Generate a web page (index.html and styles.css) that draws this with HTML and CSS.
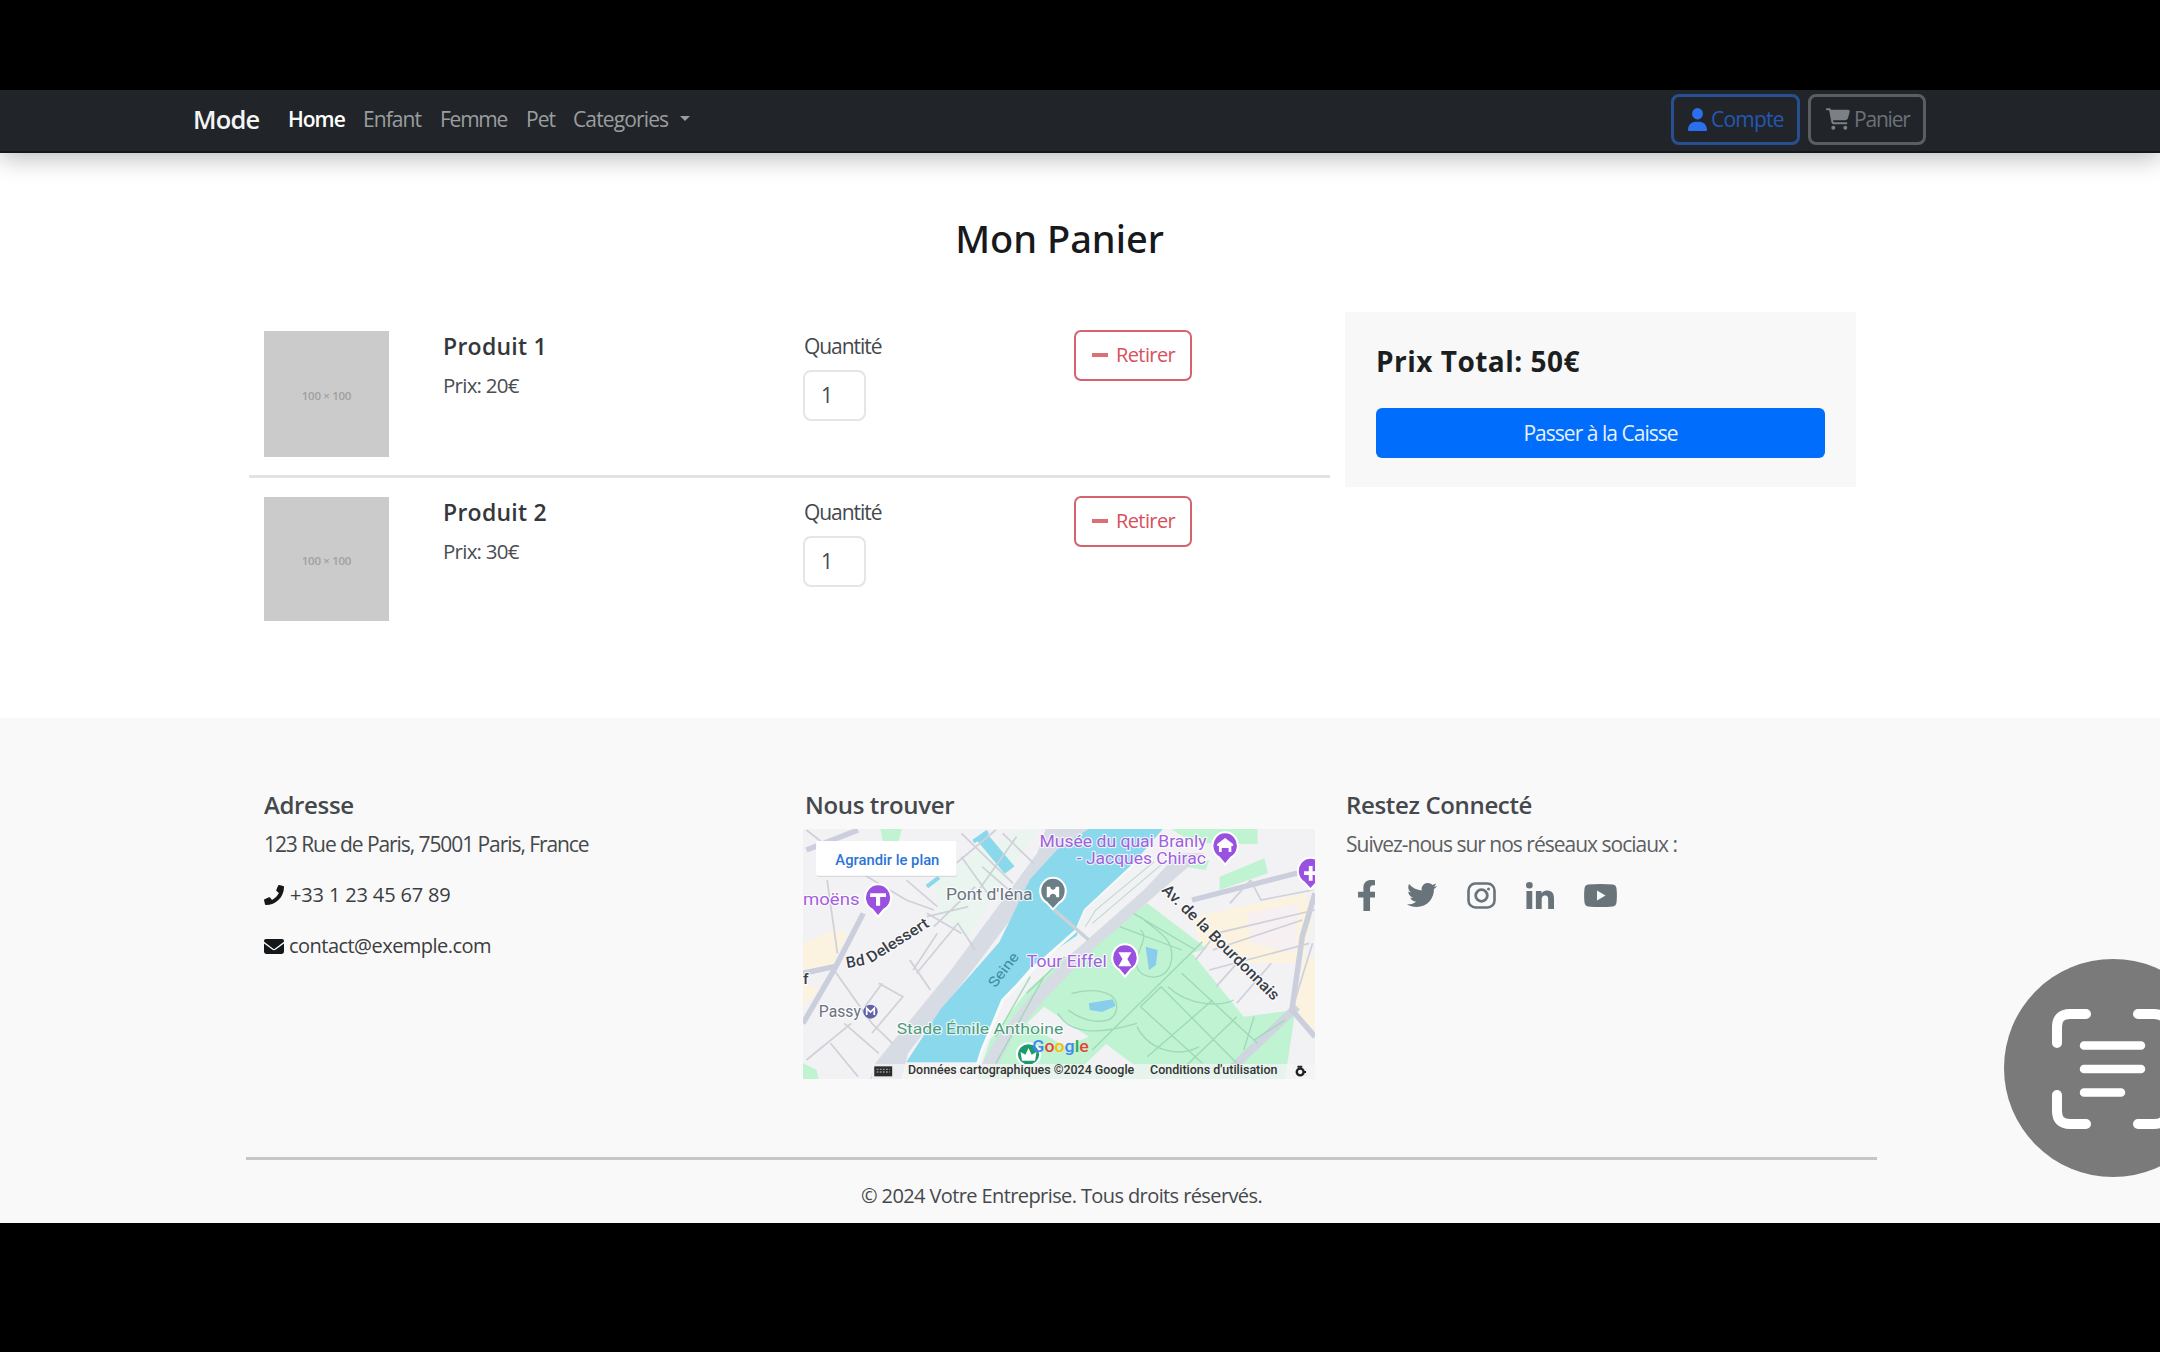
FILE: index.html
```
<!DOCTYPE html>
<html lang="fr">
<head>
<meta charset="utf-8">
<title>Mon Panier</title>
<link rel="stylesheet" href="styles.css">
</head>
<body>
<div class="page">
  <nav class="navbar">
    <a class="brand">Mode</a>
    <ul class="nav-links">
      <li class="active l-home">Home</li>
      <li class="l-enfant">Enfant</li>
      <li class="l-femme">Femme</li>
      <li class="l-pet">Pet</li>
      <li class="l-cat">Categories</li>
    </ul>
    <span class="caret"></span>
    <div class="nav-actions">
      <a class="btn btn-account">
        <svg width="19" height="23" viewBox="0 0 448 512" preserveAspectRatio="none"><path fill="currentColor" d="M224 256A128 128 0 1 0 224 0a128 128 0 1 0 0 256zm-46 48C80 304 0 384 0 482c0 17 13 30 30 30h388c17 0 30-13 30-30 0-98-80-178-178-178z"/></svg>
        <span>Compte</span>
      </a>
      <a class="btn btn-cart">
        <svg width="24" height="22" viewBox="0 0 576 512"><path fill="currentColor" d="M0 24C0 11 11 0 24 0h46c22 0 41 13 50 32h411c26 0 45 25 38 50l-41 152c-9 31-37 54-70 54H171l5 29c2 11 12 19 24 19h288c13 0 24 11 24 24s-11 24-24 24H200c-35 0-64-25-71-58L77 54c0-4-4-6-7-6H24C11 48 0 37 0 24zm128 440a48 48 0 1 1 96 0 48 48 0 1 1-96 0zm336-48a48 48 0 1 1 0 96 48 48 0 1 1 0-96z"/></svg>
        <span>Panier</span>
      </a>
    </div>
  </nav>

  <main class="cart">
    <h1 class="cart-title">Mon Panier</h1>
    <div class="cart-body">
      <div class="items">
        <div class="item">
          <div class="thumb">100 × 100</div>
          <div class="info"><h2>Produit 1</h2><p>Prix: 20€</p></div>
          <div class="qty"><label>Quantité</label><div class="qty-input">1</div></div>
          <a class="btn-remove"><i></i><span>Retirer</span></a>
        </div>
        <div class="item">
          <div class="thumb thumb-short">100 × 100</div>
          <div class="info"><h2>Produit 2</h2><p>Prix: 30€</p></div>
          <div class="qty"><label>Quantité</label><div class="qty-input">1</div></div>
          <a class="btn-remove"><i></i><span>Retirer</span></a>
        </div>
      </div>
      <aside class="summary">
        <h2>Prix Total: 50€</h2>
        <a class="checkout">Passer à la Caisse</a>
      </aside>
    </div>
  </main>

  <footer class="footer">
    <div class="footer-cols">
      <section>
        <h3>Adresse</h3>
        <p class="line tight">123 Rue de Paris, 75001 Paris, France</p>
        <p class="line contact phone">
          <svg width="20" height="20" viewBox="0 0 512 512"><path fill="currentColor" d="M493 25 389 1c-11-3-23 3-27 14l-48 112c-4 10-1 21 7 28l60 50c-36 76-98 139-176 176l-50-60c-7-8-18-11-28-7L15 362c-11 5-17 17-14 28l24 104c2 11 12 18 23 18 256 0 464-207 464-464 0-11-7-21-19-23z"/></svg>
          <span>+33 1 23 45 67 89</span>
        </p>
        <p class="line contact mail">
          <svg width="20" height="15" viewBox="0 0 512 384" preserveAspectRatio="none"><path fill="currentColor" d="M48 0h416c27 0 48 21 48 48 0 15-7 29-19 38L275 250c-11 9-27 9-38 0L19 86C7 77 0 63 0 48 0 21 21 0 48 0zM0 112l218 163c22 17 54 17 76 0l218-163v208c0 35-29 64-64 64H64c-35 0-64-29-64-64z"/></svg>
          <span>contact@exemple.com</span>
        </p>
      </section>
      <section>
        <h3 class="h-find">Nous trouver</h3>
        <svg class="map" viewBox="40 177 1487 750" preserveAspectRatio="none">
          <rect x="40" y="177" width="1487" height="750" fill="#f2f1f4"/>
          <!-- pale blocks -->
          <g fill="#fbf3df">
            <path d="M40 520l90-40 40 10-50 110-80 20zM1170 440l330-70 20 70-30 140-220 0-80-70zM1527 560v230l-60-70 30-160z"/>
            <path d="M40 640l50 20-50 50z"/>
          </g>
          <path fill="#f6f0f2" d="M1330 430l150-30-10 150-130-30z"/>
          <!-- parks -->
          <g fill="#bff3d2">
            <path d="M1040 400l420 330-50 197H545l40-120 110-150 90-80 120-90z"/>
            <path d="M1110 177h250v45h-110l-80-5zM1250 320l130-55 10 45-140 50zM1150 290l70-20-10 30z"/>
            <path d="M265 177h62l-10 38h-45zM40 880l40 20 5 27H40z"/>
          </g>
          <path fill="#e9f5ee" d="M420 330l240-150 60 0-200 320-80-60z"/>
          <g fill="#f2f1f4">
            <path d="M740 710l130 90-70 30-110-70zM920 822l90 70h-160zM1170 550l150 190 150-20-210-200z"/>
          </g>
          <path fill="#bff3d2" d="M1350 740l120-20-30 207h-140z"/>
          <!-- roads along the river -->
          <path fill="#d7dbe3" d="M250 880 470 600 720 250 745 177h125L700 370 540 590 345 850l-20 77h-90z"/>
          <path fill="#d7dbe3" d="M1130 250h75L880 540 740 690 650 800 600 900h-50l50-90 90-120 120-130 220-200z"/>
          <path fill="none" stroke="#cfd6df" stroke-width="24" d="M1475 710 1290 890"/>
          <!-- river -->
          <path fill="#89d8ec" d="M870 177h215l-100 120-130 130-20 70-130 90-90 110-70 180H340l100-160 170-200 90-190 80-90z"/>
          <path fill="none" stroke="#f6fbfa" stroke-width="9" d="M1000 285 860 420 835 480 720 585 620 690 560 840 545 890"/>
          <path fill="#f2f1f3" d="M1010 280l120-30-270 240-25-15 25-55z"/>
          <path fill="none" stroke="#bcd9cf" stroke-width="3" d="M1060 275 890 420 860 470M1085 280 880 460"/>
          <path fill="none" stroke="#89d8ec" stroke-width="36" d="M555 195 640 300"/>
          <path fill="none" stroke="#89d8ec" stroke-width="12" d="M535 215l42-30M400 350l35-28"/>
          <path fill="#89ccec" d="M1035 530l35 10-5 45-20 15zM870 700l70-12 8 20-40 18-35-6z"/>
          <path fill="none" stroke="#c9d2d8" stroke-width="10" d="M770 420 870 510"/>
          <!-- streets -->
          <g fill="none" stroke="#cbcfdd" stroke-width="16">
            <path d="M215 430 130 600 40 760M40 610l90-20M50 240l150-60M1527 370 1490 500 1460 720 1527 800M1170 390l340-90"/>
          </g>
          <g fill="none" stroke="#cfd1d9" stroke-width="5">
            <path d="M50 180l160 130 130 80 80 30M110 330l30 220M130 600l110 160 60 60M350 570l60 90M260 640l70 40-90 110M160 760l100 90M120 820l80 100M180 760 50 870M270 640l-50 70M370 610l120-150 50 80M400 430l100 60M400 440l120-30M540 350 420 470M430 490l-70 110"/>
            <path d="M500 190l150 150M620 190l90 90M560 290l100 90M500 260l90 130M340 330l90 80M600 180l-150 130M660 200l-130 190"/>
            <path d="M1180 570 1240 490 1527 420M1230 540l260-90M1220 600l290-80M1240 650l60-70M1340 330l30 60 150-30M1300 700l100-120M1520 520l-60 200M1340 330l-60 70"/>
          </g>
          <!-- park paths -->
          <g fill="none" stroke="#9fd9b8" stroke-width="4">
            <path d="M1200 515 880 840M1020 440c40 40 100 60 90 130s-90 60-100 20 40-90 10-110M960 470l180 70M1000 430l180 110M1080 650l220 230M1140 610l220 210M1020 710l180 170M1080 650l-60 60M1300 740l-170 170M1230 690l-190 170M820 670c80-20 140 0 130 50s-90 40-140 0M780 730c40 70 130 60 230 30M1100 650c60 60 160 60 190 40M1010 770c40 80 130 90 180 60M700 620l-100 180M740 620 600 880M800 560l-110 110"/>
            <path d="M1350 740l-30 100M1440 750l-90 60" />
          </g>
          <!-- pins -->
          <g stroke="#fff" stroke-width="6">
            <path fill="#9b51e0" d="M258 440l-18-22a38 40 0 1 1 36 0zM1266 284l-18-22a37 40 0 1 1 36 0zM975 620l-18-22a37 40 0 1 1 36 0zM1514 358l-18-20a37 40 0 1 1 36 0z"/>
            <path fill="#6b7f86" d="M766 418l-18-20a37 40 0 1 1 36 0z"/>
            <ellipse cx="695" cy="853" rx="34" ry="33" fill="#1d9a6c"/>
          </g>
          <g fill="#fff">
            <path d="M235 370h46v11h-17v26h-12v-26h-17zM1243 222l23-18 23 18v6h-5v18h-8v-12h-20v12h-8v-18h-5zM956 547h38l-12 20 12 22h-38l12-22zM1495 304h14v-16h11v16h7v11h-7v17h-11v-17h-14zM748 350h10c0 12 16 12 16 0h10v32h-8c0-14-20-14-20 0h-8zM672 846l14 8 9-20 9 20 14-8-4 26h-38z"/>
          </g>
          <circle cx="236" cy="725" r="21" fill="#6263a6"/>
          <path d="M225 735v-20l11 11 11-11v20" fill="none" stroke="#fff" stroke-width="5"/>
          <!-- labels -->
          <g class="halo purple" font-size="50">
            <text x="727" y="230" textLength="485" lengthAdjust="spacingAndGlyphs">Musée du quai Branly</text>
            <text x="835" y="283" textLength="375" lengthAdjust="spacingAndGlyphs">- Jacques Chirac</text>
            <text x="40" y="406" textLength="164" lengthAdjust="spacingAndGlyphs">moëns</text>
            <text x="690" y="590" textLength="232" lengthAdjust="spacingAndGlyphs">Tour Eiffel</text>
          </g>
          <g class="halo slate" font-size="50">
            <text x="455" y="390" textLength="252" lengthAdjust="spacingAndGlyphs">Pont d'Iéna</text>
            <text x="86" y="740" textLength="122" lengthAdjust="spacingAndGlyphs">Passy</text>
          </g>
          <text class="halo green" font-size="46" x="312" y="791" textLength="484" lengthAdjust="spacingAndGlyphs">Stade Émile Anthoine</text>
          <text class="river" font-size="42" transform="translate(598 655) rotate(-53)" textLength="118" lengthAdjust="spacingAndGlyphs">Seine</text>
          <g class="halo dark" font-size="46">
            <text transform="translate(168 594) rotate(-10)" textLength="54" lengthAdjust="spacingAndGlyphs">Bd</text>
            <text transform="translate(237 580) rotate(-33)" textLength="205" lengthAdjust="spacingAndGlyphs">Delessert</text>
            <text transform="translate(1080 362) rotate(45.5)" textLength="465" lengthAdjust="spacingAndGlyphs">Av. de la Bourdonnais</text>
            <text x="40" y="643">f</text>
          </g>
          <text class="google" font-size="52" x="706" y="847" textLength="164" lengthAdjust="spacingAndGlyphs"><tspan fill="#4285f4">G</tspan><tspan fill="#ea4335">o</tspan><tspan fill="#fbbc05">o</tspan><tspan fill="#4285f4">g</tspan><tspan fill="#34a853">l</tspan><tspan fill="#ea4335">e</tspan></text>
          <!-- attribution strip -->
          <path fill="#f4f4f5" fill-opacity=".75" d="M240 882h1287v45H240z"/>
          <path fill="#2c2c2c" d="M247 889h52v30h-52z"/>
          <path stroke="#999" stroke-width="4" stroke-dasharray="5 4" d="M254 898h38M254 906h38"/>
          <g class="legal" font-size="36">
            <text x="345" y="912" textLength="657" lengthAdjust="spacingAndGlyphs">Données cartographiques ©2024 Google</text>
            <text x="1048" y="912" textLength="370" lengthAdjust="spacingAndGlyphs">Conditions d'utilisation</text>
          </g>
          <circle cx="1484" cy="906" r="10" fill="none" stroke="#222" stroke-width="7"/>
          <path stroke="#222" stroke-width="6" d="M1476 890h14M1493 906h8"/>
          <!-- expand link -->
          <rect x="80" y="218" width="406" height="103" rx="5" fill="#c9cbd0" opacity=".6"/>
          <rect x="78" y="213" width="408" height="104" rx="5" fill="#fff"/>
          <text class="expand" font-size="44" x="134" y="284" textLength="302" lengthAdjust="spacingAndGlyphs">Agrandir le plan</text>
        </svg>
      </section>
      <section>
        <h3 class="h-social">Restez Connecté</h3>
        <p class="line tight social-text">Suivez-nous sur nos réseaux sociaux :</p>
        <div class="socials">
          <svg width="17" height="31" viewBox="22 0 257 512" preserveAspectRatio="none"><path fill="currentColor" d="m279 288 14-93h-89v-60c0-25 12-50 52-50h40V7s-36-7-71-7c-73 0-121 44-121 125v70H23v93h81v224h100V288z"/></svg>
          <svg width="30" height="24" viewBox="0 48 512 416" preserveAspectRatio="none"><path fill="currentColor" d="M459 152c1 4 1 9 1 13 0 139-106 299-299 299-59 0-115-17-161-47 8 1 16 1 25 1 49 0 94-16 130-45-46-1-85-31-98-73 7 1 13 2 20 2 9 0 19-2 28-4-48-10-84-52-84-103v-1c14 8 30 13 47 13-28-19-47-51-47-87 0-19 5-37 14-53 52 64 129 105 217 110-2-8-3-16-3-24 0-58 47-105 105-105 30 0 58 13 77 33 24-5 46-13 66-25-8 24-24 45-46 58 21-2 42-8 61-16-14 21-32 39-53 54z"/></svg>
          <svg width="29" height="27" viewBox="0 0 29 27" fill="none" stroke="currentColor"><rect x="1.5" y="1.5" width="26" height="24" rx="7" stroke-width="2.6"/><circle cx="14.5" cy="13.5" r="5.8" stroke-width="2.8"/><circle cx="21.5" cy="7" r="1.5" fill="currentColor" stroke="none"/></svg>
          <svg width="28" height="27" viewBox="0 0 448 448" preserveAspectRatio="none"><path fill="currentColor" d="M100 448H7V149h93zM54 108a54 54 0 1 1 0-108 54 54 0 0 1 0 108zM448 448h-93V302c0-34-1-79-48-79-49 0-56 38-56 77v148h-93V149h89v41h1c13-24 43-48 88-48 94 0 112 62 112 142z"/></svg>
          <svg width="33" height="23" viewBox="0 0 33 23"><path fill="currentColor" fill-rule="evenodd" d="M4 .6Q16.500-.6 29 .6Q32 1 32.500 4.500Q33.300 11.500 32.500 18.500Q32 22 29 22.400Q16.500 23.600 4 22.400Q1 22 .5 18.500Q-.3 11.500.5 4.500Q1 1 4 .6zM13 6.500v10l8.500-5z"/></svg>
        </div>
      </section>
    </div>
    <p class="copyright">© 2024 Votre Entreprise. Tous droits réservés.</p>
    <svg class="scan" width="218" height="218" viewBox="0 0 218 218">
      <circle cx="109" cy="109" r="109" fill="#7a7a7b"/>
      <g fill="none" stroke="#fff" stroke-linecap="round">
        <path stroke-width="10" d="M53 84V68Q53 55 66 55H82M134 55H150Q163 55 163 68V84M53 136V152Q53 165 66 165H82M134 165H150Q163 165 163 152V136"/>
        <path stroke-width="8.500" d="M80 86.500H137M80 110H137M80 133.500H117"/>
      </g>
    </svg>
  </footer>
</div>
</body>
</html>
```
FILE: styles.css
```
* { box-sizing: border-box; }
body { margin: 0; background: #000; font-family: "Open Sans", "Noto Sans", sans-serif; color: #212529; }
h1, h2, h3, p, ul { margin: 0; padding: 0; }
svg { flex: none; display: block; }
.page { margin-top: 90px; height: 1133px; background: #fff; overflow: hidden; display: flex; flex-direction: column; }

/* navigation */
.navbar { flex: none; height: 63px; padding: 0 234px 3px 193px; background: #212529; display: flex; align-items: center; box-shadow: 0 6px 24px rgba(0,0,0,.26); border-bottom: 2px solid #14171a; }
.brand { width: 95px; font-size: 25.500px; font-weight: 600; letter-spacing: -.8px; color: #f4f4f4; }
.nav-links { display: flex; list-style: none; font-size: 21px; color: #9b9d9f; }
.nav-links .active { color: #fff; font-weight: 600; }
.l-home { width: 75px; letter-spacing: -1px; }
.l-enfant { width: 77px; letter-spacing: -.95px; }
.l-femme { width: 86px; letter-spacing: -1.250px; }
.l-pet { width: 47px; letter-spacing: -.9px; }
.l-cat { width: 107px; letter-spacing: -.87px; }
.caret { border: 5px solid transparent; border-top-color: #9b9d9f; border-bottom: 0; margin-top: -2px; }
.nav-actions { margin-left: auto; display: flex; gap: 8px; }
.btn { height: 51px; border: 3px solid; border-radius: 8px; display: flex; align-items: center; font-size: 21px; }
.btn-account { width: 129px; padding-left: 14px; gap: 4px; color: #2c6fee; border-color: #294f93; letter-spacing: -.8px; }
.btn-account span { color: #2557b5; }
.btn-cart { width: 118px; padding-left: 15px; gap: 4px; color: #7b8085; border-color: #595e63; letter-spacing: -1.200px; }
.btn-cart span { color: #6c7177; }

/* cart */
.cart { flex: none; height: 565px; padding: 59px 304px 0 249px; }
.cart-title { margin-left: 14px; text-align: center; font: 500 38px/52px "Noto Sans", "Open Sans", sans-serif; color: #17191c; }
.cart-body { margin-top: 48px; display: flex; justify-content: space-between; align-items: flex-start; }
.items { width: 1081px; }
.item { padding: 19px 0 0 15px; display: grid; grid-template-columns: 179px 361px 270px 1fr; align-items: start; height: 147px; }
.item + .item { border-top: 3px solid #e2e3e4; height: 166px; margin-top: 16px; }
.thumb { width: 125px; height: 126px; background: #cbcbcb; color: #a0a0a0; font-size: 11.500px; font-weight: 600; display: flex; align-items: center; justify-content: center; padding-top: 3px; letter-spacing: -.3px; }
.thumb-short { height: 124px; }
.info h2 { margin-top: -1px; font-size: 23px; font-weight: 600; line-height: 32px; letter-spacing: .26px; color: #34373b; }
.info p { margin-top: 8px; font-size: 20.500px; line-height: 30px; letter-spacing: -.75px; color: #4a4d52; }
.qty label { display: block; margin-top: -1px; font-size: 21px; line-height: 32px; letter-spacing: -1.050px; color: #45484d; }
.qty-input { margin: 8px 0 0 -1px; width: 63px; height: 51px; border: 2px solid #e3e5e8; border-radius: 8px; padding-left: 16px; font-size: 21px; line-height: 47px; color: #45484d; }
.btn-remove { margin-top: -1px; width: 118px; height: 51px; border: 2px solid #d4636f; border-radius: 7px; display: flex; align-items: center; gap: 8px; padding: 0 0 2px 16px; font-size: 20px; letter-spacing: -.6px; color: #d8505c; }
.btn-remove i { width: 16px; height: 4px; background: #da6f78; }
.summary { width: 511px; height: 175px; padding: 29px 31px 0 31px; background: #f8f8f8; }
.summary h2 { font-size: 28px; line-height: 40px; letter-spacing: .48px; color: #1c1f22; }
.checkout { margin-top: 27px; height: 50px; border-radius: 6px; background: #006dfd; color: #e6f0ff; font-size: 21px; line-height: 50px; text-align: center; letter-spacing: -.97px; display: block; }

/* footer */
.footer { flex: 1; position: relative; background: #f9f9f9; padding: 71px 283px 0 246px; }
.footer-cols { height: 368px; padding-left: 18px; display: grid; grid-template-columns: 540px 542px 1fr; align-items: start; }
.footer h3 { font-size: 24px; font-weight: 600; line-height: 32px; letter-spacing: -.35px; color: #45484c; }
.footer .h-find { padding-left: 1px; }
.line { height: 32px; margin-top: 19px; font-size: 21px; line-height: 32px; color: #45484c; }
.tight { margin-top: 7px; letter-spacing: -1.070px; }
.social-text { letter-spacing: -1px; color: #5c5f63; }
.contact { display: flex; align-items: center; font-size: 20px; gap: 6px; color: #15181b; }
.contact span { color: #3a3d41; }
.phone { letter-spacing: -.15px; }
.mail { letter-spacing: -.53px; gap: 5px; }
.socials { display: flex; align-items: center; height: 32px; margin: 19px 0 0 12px; color: #69737a; }
.socials svg + svg { margin-left: 30px; }
.socials svg:nth-child(2) { margin-left: 32px; }
.copyright { border-top: 3px solid #c6c6c6; padding: 20px 0 0; text-align: center; font-size: 20px; line-height: 32px; letter-spacing: -.6px; color: #45484c; }
.scan { position: absolute; left: 2004px; top: 241px; }

/* map */
.map { width: 512px; height: 250px; margin-top: 8px; margin-left: -1px; font-family: Roboto, sans-serif; }
.halo { paint-order: stroke; stroke: #fff; stroke-width: 7px; stroke-opacity: .75; stroke-linejoin: round; }
.purple { fill: #a35fe0; }
.slate { fill: #6a7280; }
.green { fill: #4f9b7c; }
.dark { fill: #3a3f49; font-weight: 500; }
.river { fill: #3f8ba0; }
.google { font-weight: 500; }
.legal { fill: #333; font-weight: 500; }
.expand { fill: #2b74d8; font-weight: 500; }
```
